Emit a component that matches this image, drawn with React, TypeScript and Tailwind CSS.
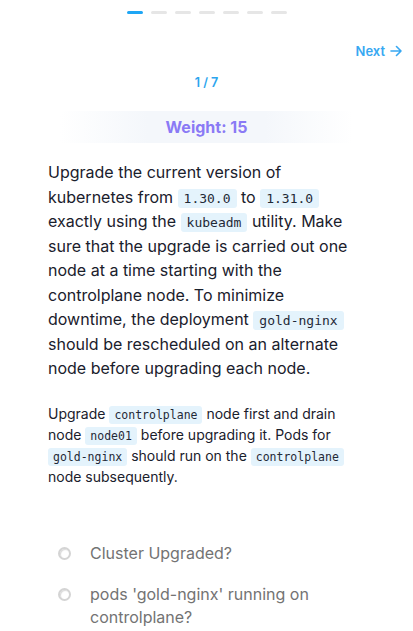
import React from "react";

const Code = ({ children, small }: { children: React.ReactNode; small?: boolean }) => (
  <code
    className={
      small
        ? "rounded-[3px] bg-[#e4f3fc] px-[5px] py-[2px] text-[11.5px] leading-[1] text-[#1f2937] [font-family:'DejaVu_Sans_Mono',monospace]"
        : "rounded-[3px] bg-[#e4f3fc] px-[6px] py-[2px] text-[13px] leading-[1] text-[#1f2937] [font-family:'DejaVu_Sans_Mono',monospace]"
    }
  >
    {children}
  </code>
);

const Radio = () => (
  <span className="mt-[5px] inline-block h-[13px] w-[13px] shrink-0 rounded-full border-[2px] border-[#d4d4d4] bg-white shadow-[inset_1px_1px_1px_rgba(0,0,0,0.15)]" />
);

export default function App() {
  const dashes = [0, 1, 2, 3, 4, 5, 6];
  return (
    <div className="min-h-[631px] w-[413px] bg-white [font-family:Inter,'Noto_Sans',sans-serif]">
      <div className="flex justify-center gap-[8px] pt-[11px]">
        {dashes.map((d) => (
          <span
            key={d}
            className={
              d === 0
                ? "h-[3px] w-[16px] rounded-full bg-[#1ea6f5]"
                : "h-[3px] w-[16px] rounded-full bg-[#e6e6e6]"
            }
          />
        ))}
      </div>
      <div className="mt-[28px] flex justify-end pr-[11px]">
        <span className="flex items-center gap-[5px] text-[13px] font-semibold leading-[18px] text-[#38a8f2]">
          Next
          <svg width="12" height="12" viewBox="0 0 12 12" fill="none" stroke="currentColor" strokeWidth="1.6" strokeLinecap="round" strokeLinejoin="round">
            <path d="M1 6h10M6.5 1.5 11 6l-4.5 4.5" />
          </svg>
        </span>
      </div>
      <div className="mt-[15px] text-center text-[12.5px] font-semibold leading-[16px] text-[#2ca5ee]">1 / 7</div>
      <div className="mx-[60px] mt-[20px] flex h-[32px] items-center justify-center bg-[linear-gradient(90deg,rgba(241,245,251,0)_0%,#f4f7fb_30%,#f4f7fb_70%,rgba(241,245,251,0)_100%)]">
        <span className="text-[16px] font-bold text-[#8a7af5]">Weight: 15</span>
      </div>
      <div className="px-[48px]">
        <p className="mt-[17px] text-[16px] leading-[24.5px] text-[#1a202c]">
          Upgrade the current version of kubernetes from <Code>1.30.0</Code> to <Code>1.31.0</Code> exactly using the{" "}
          <Code>kubeadm</Code> utility. Make sure that the upgrade is carried out one node at a time starting with the
          controlplane node. To minimize downtime, the deployment <Code>gold-nginx</Code> should be rescheduled on an
          alternate node before upgrading each node.
        </p>
        <p className="mt-[22px] text-[14px] leading-[21px] text-[#1a202c]">
          Upgrade <Code small>controlplane</Code> node first and drain node <Code small>node01</Code> before upgrading it.
          Pods for <Code small>gold-nginx</Code> should run on the <Code small>controlplane</Code> node subsequently.
        </p>
      </div>
      <div className="mt-[55px] flex flex-col gap-[18px] pl-[58px] pr-[48px]">
        <div className="flex items-start gap-[19px]">
          <Radio />
          <span className="text-[16px] leading-[23px] text-[#737373]">Cluster Upgraded?</span>
        </div>
        <div className="flex items-start gap-[19px]">
          <Radio />
          <span className="text-[16px] leading-[23px] text-[#737373]">pods 'gold-nginx' running on controlplane?</span>
        </div>
      </div>
    </div>
  );
}
